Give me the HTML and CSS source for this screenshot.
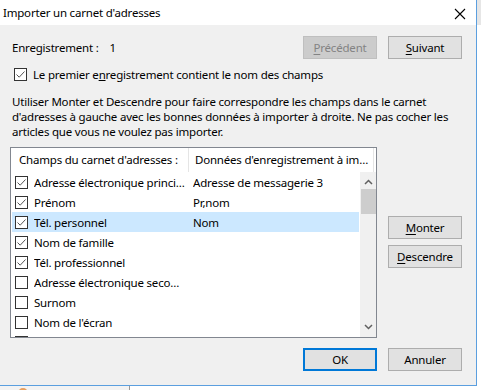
FILE: index.html
```html
<!DOCTYPE html>
<html lang="fr">
<head>
  <meta charset="UTF-8" />
  <title>Importer un carnet d'adresses</title>
  <link rel="stylesheet" href="styles.css">
</head>
<body>

  <div class="screen">
    <div class="top">
      <div class="dialog">
        <div class="titlebar">
          <span>Importer un carnet d'adresses</span>
          <svg class="close" width="12" height="12" viewBox="0 0 12 12">
            <path d="M1 1 L11 11 M11 1 L1 11" stroke="#000" stroke-width="1.1" fill="none"/>
          </svg>
        </div>

        <div class="content">
          <div class="record-row">
            <span class="record-label">Enregistrement :</span>
            <span class="record-num">1</span>
            <button class="btn btn-disabled push-right"><u>P</u>récédent</button>
            <button class="btn"><u>S</u>uivant</button>
          </div>

          <div class="check-row">
            <span class="cb checked"></span>
            <span>Le premier e<u>n</u>registrement contient le nom des champs</span>
          </div>

          <p class="help">Utiliser Monter et Descendre pour faire correspondre les champs dans le carnet d'adresses à gauche avec les bonnes données à importer à droite. Ne pas cocher les articles que vous ne voulez pas importer.</p>

          <div class="main">
            <div class="listbox">
              <div class="list-head">
                <div class="col1">Champs du carnet d'adresses :</div>
                <div class="col2">Données d'enregistrement à importer</div>
              </div>
              <div class="list-body">
                <div class="rows">
                  <div class="row"><span class="cb checked"></span><span class="c1">Adresse électronique principale</span><span class="c2">Adresse de messagerie 3</span></div>
                  <div class="row"><span class="cb checked"></span><span class="c1">Prénom</span><span class="c2">Pr,nom</span></div>
                  <div class="row selected"><span class="cb checked"></span><span class="c1">Tél. personnel</span><span class="c2">Nom</span></div>
                  <div class="row"><span class="cb checked"></span><span class="c1">Nom de famille</span><span class="c2"></span></div>
                  <div class="row"><span class="cb checked"></span><span class="c1">Tél. professionnel</span><span class="c2"></span></div>
                  <div class="row"><span class="cb"></span><span class="c1">Adresse électronique secondaire</span><span class="c2"></span></div>
                  <div class="row"><span class="cb"></span><span class="c1">Surnom</span><span class="c2"></span></div>
                  <div class="row"><span class="cb"></span><span class="c1">Nom de l'écran</span><span class="c2"></span></div>
                  <div class="row"><span class="cb"></span><span class="c1">Fax</span><span class="c2"></span></div>
                </div>
                <div class="scrollbar">
                  <svg class="arrow" width="9" height="6" viewBox="0 0 9 6"><path d="M1 5 L4.5 1.5 L8 5" stroke="#606060" stroke-width="1.5" fill="none"/></svg>
                  <div class="thumb"></div>
                  <div class="track"></div>
                  <svg class="arrow" width="9" height="6" viewBox="0 0 9 6"><path d="M1 1 L4.5 4.5 L8 1" stroke="#606060" stroke-width="1.5" fill="none"/></svg>
                </div>
              </div>
            </div>

            <div class="side">
              <button class="btn"><u>M</u>onter</button>
              <button class="btn"><u>D</u>escendre</button>
            </div>
          </div>

          <div class="footer-row">
            <button class="btn btn-default">OK</button>
            <button class="btn">Annuler</button>
          </div>
        </div>
      </div>
      <div class="edge">
        <div class="edge-top"></div>
      </div>
    </div>
    <div class="taskbar">
      <div class="tb-left"><span class="tb-icon"></span><span>Jadebleu (3)</span></div>
      <div class="tb-right">Convocation assemblée générale ordinaire et</div>
    </div>
  </div>

</body>
</html>
```

FILE: styles.css
```css
body {
  margin: 0;
  font-family: 'Noto Sans', 'Open Sans', sans-serif;
  font-size: 11.5px;
  letter-spacing: -0.2px;
  color: #000;
  background: #fff;
}

.screen {
  width: 481px;
  height: 390px;
  overflow: hidden;
  display: flex;
  flex-direction: column;
}

.top {
  display: flex;
  height: 386px;
}

.dialog {
  width: 477px;
  height: 386px;
  box-sizing: border-box;
  background: #f0f0f0;
  border-right: 1px solid #5b9fdf;
  border-bottom: 1px solid #5b9fdf;
  display: flex;
  flex-direction: column;
}

.titlebar {
  height: 25px;
  background: #fff;
  display: flex;
  align-items: center;
  justify-content: space-between;
  padding: 0 10px 0 3px;
}

.close {
  display: block;
  margin-top: 2px;
}

.content {
  padding: 0 14px 0 10px;
  display: flex;
  flex-direction: column;
}

.btn {
  width: 74px;
  height: 23px;
  box-sizing: border-box;
  background: #e1e1e1;
  border: 1px solid #adadad;
  font-family: inherit;
  font-size: 11.5px;
  letter-spacing: -0.2px;
  color: #000;
  padding: 0;
}

.btn u {
  text-decoration-thickness: 1px;
  text-underline-offset: 2px;
}

.btn-disabled {
  background: #cccccc;
  border-color: #bfbfbf;
  color: #838383;
}

.btn-default {
  border: 2px solid #0078d7;
}

.record-row {
  display: flex;
  align-items: center;
  margin-top: 11px;
  padding-left: 2px;
  gap: 11px;
}

.push-right {
  margin-left: auto;
}

.check-row {
  display: flex;
  align-items: center;
  height: 20px;
  margin-top: 5px;
  padding-left: 4px;
  gap: 6px;
}

.cb {
  display: inline-block;
  width: 13px;
  height: 13px;
  box-sizing: border-box;
  border: 1px solid #333;
  background: #fff;
  flex-shrink: 0;
}

.cb.checked {
  background: #fff url("data:image/svg+xml;utf8,<svg xmlns='http://www.w3.org/2000/svg' width='11' height='11' viewBox='0 0 11 11'><path d='M1.5 5.5 L4.2 8.2 L9.5 2.5' stroke='%23555' stroke-width='1' fill='none'/></svg>") no-repeat center;
}

.help {
  margin: 10px 0 0 2px;
  line-height: 15px;
}

.main {
  display: flex;
  margin-top: 8px;
  gap: 11px;
}

.listbox {
  width: 367px;
  height: 191px;
  box-sizing: border-box;
  border: 1px solid #828790;
  background: #fff;
  display: flex;
  flex-direction: column;
  overflow: hidden;
}

.list-head {
  display: flex;
  height: 24px;
  flex-shrink: 0;
  align-items: center;
}

.list-head .col1 {
  width: 169px;
  padding-left: 8px;
  border-right: 1px solid #e5e5e5;
  height: 24px;
  line-height: 24px;
  white-space: nowrap;
  overflow: hidden;
}

.list-head .col2 {
  width: 178px;
  padding-left: 6px;
  border-right: 1px solid #e5e5e5;
  height: 24px;
  line-height: 24px;
  white-space: nowrap;
  overflow: hidden;
  text-overflow: ellipsis;
}

.list-body {
  display: flex;
  flex: 1;
  overflow: hidden;
}

.rows {
  flex: 1;
  padding: 0 1px;
}

.row {
  display: flex;
  align-items: center;
  height: 20px;
  padding-left: 3px;
  white-space: nowrap;
}

.row.selected {
  background: #cce8ff;
}

.row .c1 {
  width: 152px;
  margin-left: 6px;
  overflow: hidden;
  text-overflow: ellipsis;
}

.row .c2 {
  margin-left: 7px;
  overflow: hidden;
}

.scrollbar {
  width: 16px;
  background: #f0f0f0;
  display: flex;
  flex-direction: column;
  align-items: center;
}

.scrollbar .arrow {
  display: block;
  margin: 7px 0;
}

.thumb {
  width: 15px;
  height: 25px;
  background: #cdcdcd;
  margin-top: -3px;
}

.track {
  flex: 1;
}

.side {
  display: flex;
  flex-direction: column;
  gap: 6px;
  padding-top: 69px;
}

.footer-row {
  display: flex;
  justify-content: flex-end;
  gap: 11px;
  margin-top: 10px;
}

.edge {
  flex: 1;
  background: #fff;
}

.edge-top {
  height: 25px;
  background: #e6e6e6;
}

.taskbar {
  height: 4px;
  display: flex;
  overflow: hidden;
  font-size: 16px;
  line-height: 20px;
}

.tb-left {
  width: 200px;
  background: #f3f3f3;
  border-right: 1px solid #999;
  display: flex;
  gap: 8px;
  padding-left: 18px;
  color: #555;
}

.tb-icon {
  width: 10px;
  height: 10px;
  margin-top: 2px;
  background: #e8a060;
  border-radius: 5px;
}

.tb-right {
  flex: 1;
  padding-left: 20px;
  color: #222;
  white-space: nowrap;
}
```
